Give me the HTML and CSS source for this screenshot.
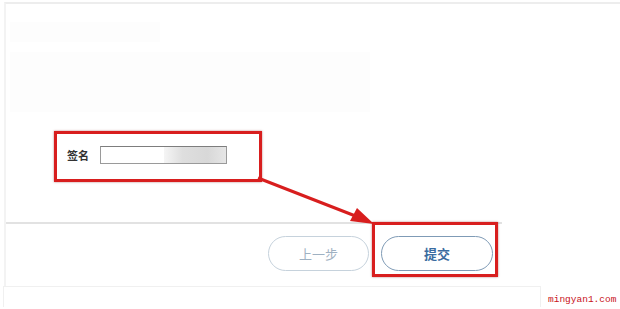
FILE: index.html
```html
<!DOCTYPE html>
<html lang="zh">
<head>
<meta charset="utf-8">
<link rel="stylesheet" href="styles.css">
</head>
<body>
<div class="page">
  <div class="panel">
    <div class="top-area">
      <div class="faint faint-a"></div>
      <div class="faint faint-b"></div>
    </div>
    <div class="form-area">
      <div class="form-row">
        <span class="label">签名</span>
        <span class="input"><span class="blur"></span></span>
      </div>
    </div>
    <div class="actions">
      <button class="btn btn-prev">上一步</button>
      <button class="btn btn-submit">提交</button>
    </div>
  </div>
  <div class="bottom">
    <div class="bottom-box"></div>
    <span class="watermark">mingyan1.com</span>
  </div>

  <div class="mark mark-sign"></div>
  <div class="mark mark-submit"></div>
  <svg class="arrow" width="620" height="309" viewBox="0 0 620 309">
    <line x1="258" y1="178" x2="358" y2="217" stroke="#d81e1e" stroke-width="3"/>
    <polygon points="374,224 350,221 357,208" fill="#d81e1e"/>
  </svg>
</div>
</body>
</html>
```

FILE: styles.css
```css
* { box-sizing: border-box; }
html, body { margin: 0; padding: 0; background: #fff; }
body { font-family: "Noto Sans CJK SC", "Noto Sans", sans-serif; }

.page { position: relative; width: 620px; height: 309px; overflow: hidden; }

.panel {
  margin-left: 4px;
  margin-top: 2px;
  border-top: 2px solid #ededed;
  border-left: 2px solid #f3f3f3;
  height: 284px;
  display: flex;
  flex-direction: column;
}

.top-area { height: 108px; padding: 18px 0 0 2px; display: flex; flex-direction: column; gap: 10px; }
.faint { background: #fdfdfd; }
.faint-a { width: 150px; height: 20px; margin-left: 2px; }
.faint-b { width: 360px; height: 60px; margin-left: 2px; }

.form-area {
  height: 112px;
  border-bottom: 2px solid #e2e2e2;
  width: 496px;
  padding: 34px 0 0 61px;
}
.form-row { display: flex; align-items: center; gap: 11px; }
.label { font-size: 11px; font-weight: 700; color: #333; line-height: 17px; }
.input {
  width: 127px; height: 18px;
  border: 1px solid #9a9a9a;
  border-top-color: #7d7d7d;
  background: #fff;
  display: flex; justify-content: flex-end;
}
.blur { width: 62px; height: 100%; background: linear-gradient(90deg, #f5f5f5, #dedede 30%, #d8d8d8 70%, #e6e6e6); }

.actions { display: flex; gap: 12px; padding: 12px 0 0 262px; }
.btn {
  height: 35px;
  border-radius: 18px;
  background: #fff;
  font-family: "Noto Sans CJK SC", sans-serif;
  font-size: 13px;
  padding: 0;
}
.btn-prev { width: 101px; border: 1px solid #c6d2dc; color: #9fb1c2; }
.btn-submit { width: 112px; border: 1px solid #7f9bb6; color: #3a6ca0; font-weight: 700; }

.bottom { display: flex; align-items: center; padding-left: 3px; }
.bottom-box { width: 538px; height: 21px; border: 1px solid #f0f0f0; border-bottom: none; }
.watermark { margin-left: 7px; font-family: "Liberation Mono", monospace; font-size: 9.5px; color: #c8121b; margin-top: 6px; }

.mark { position: absolute; border: 3px solid #d81e1e; box-shadow: 0 0 2px rgba(120,0,0,.5); }
.mark-sign { left: 54px; top: 131px; width: 208px; height: 51px; }
.mark-submit { left: 372px; top: 222px; width: 126px; height: 55px; }
.arrow { position: absolute; left: 0; top: 0; pointer-events: none; }
```
